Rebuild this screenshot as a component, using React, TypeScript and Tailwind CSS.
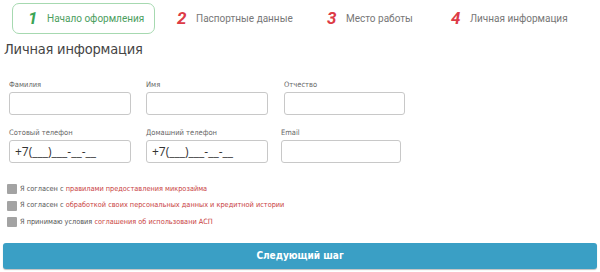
const steps = [
  { n: '1', label: 'Начало оформления', active: true },
  { n: '2', label: 'Паспортные данные' },
  { n: '3', label: 'Место работы' },
  { n: '4', label: 'Личная информация' },
]

function Field({ label, value, className = '' }: { label: string; value?: string; className?: string }) {
  return (
    <div className={`flex flex-col ${className}`}>
      <span className="text-[7.5px] leading-[10px] text-[#666] mb-[2px]">{label}</span>
      <div className="h-[23px] w-full border border-[#c8c8c8] rounded-[3px] bg-white flex items-center px-[5px] text-[12px] text-[#333] font-['Open_Sans',sans-serif]">
        {value}
      </div>
    </div>
  )
}

function Agree({ text, link }: { text: string; link: string }) {
  return (
    <div className="flex items-center gap-[3px] h-[10px]">
      <span className="w-[10px] h-[10px] bg-[#a3a3a3] rounded-[1px] shrink-0" />
      <span className="text-[7.3px] text-[#555]">
        {text} <span className="text-[#c9433f]">{link}</span>
      </span>
    </div>
  )
}

export default function App() {
  return (
    <div className="w-[600px] h-[272px] bg-white overflow-hidden font-['DejaVu_Sans_Condensed','DejaVu_Sans',sans-serif]">
      <div className="flex items-center pl-[12px] pt-[3px] h-[34px]">
        {steps.map((s, i) => (
          <div
            key={s.n}
            className={`flex items-center h-[31px] font-['Roboto',sans-serif] ${
              s.active
                ? 'w-[143px] border border-[#a6d9b0] rounded-[7px] pl-[15px] mr-[22px]'
                : i === 1
                ? 'w-[150px]'
                : 'w-[124px]'
            }`}
          >
            <span
              className={`italic font-bold text-[17px] w-[18px] ${s.active ? 'text-[#3ba555]' : 'text-[#dd3b46]'}`}
            >
              {s.n}
            </span>
            <span className={`text-[10px] ml-[1px] ${s.active ? 'text-[#4c9e5e]' : 'text-[#777]'}`}>{s.label}</span>
          </div>
        ))}
      </div>

      <h2 className="pl-[4px] mt-[5px] text-[14.5px] tracking-[-0.2px] leading-[20px] text-[#444]">Личная информация</h2>

      <div className="pl-[9px] mt-[21px] flex flex-col gap-[13px]">
        <div className="flex gap-[15px]">
          <Field label="Фамилия" className="w-[122px]" />
          <Field label="Имя" className="w-[122px]" />
          <Field label="Отчество" className="w-[121px] ml-[1px]" />
        </div>
        <div className="flex gap-[15px]">
          <Field label="Сотовый телефон" value="+7(___)___-__-__" className="w-[122px]" />
          <Field label="Домашний телефон" value="+7(___)___-__-__" className="w-[122px]" />
          <Field label="Email" className="w-[120px] -ml-[2px]" />
        </div>
      </div>

      <div className="pl-[7px] mt-[21px] flex flex-col gap-[6.5px]">
        <Agree text="Я согласен с" link="правилами предоставления микрозайма" />
        <Agree text="Я согласен с" link="обработкой своих персональных данных и кредитной истории" />
        <Agree text="Я принимаю условия" link="соглашения об использовани АСП" />
      </div>

      <div className="px-[3px] mt-[15px]">
        <button className="w-full h-[26px] rounded-[3px] bg-[#3a9fc5] shadow-[0_1px_1px_rgba(0,0,0,0.25)] text-white font-bold text-[10px]">
          Следующий шаг
        </button>
      </div>
    </div>
  )
}
